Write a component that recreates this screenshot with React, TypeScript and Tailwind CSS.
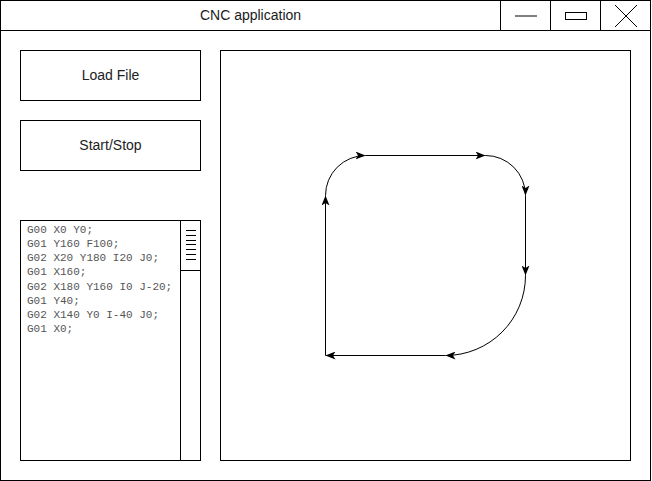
import React from 'react';

const gcode = [
  'G00 X0 Y0;',
  'G01 Y160 F100;',
  'G02 X20 Y180 I20 J0;',
  'G01 X160;',
  'G02 X180 Y160 I0 J-20;',
  'G01 Y40;',
  'G02 X140 Y0 I-40 J0;',
  'G01 X0;',
];

const ToolPath: React.FC = () => (
  <svg viewBox="221 51 409 409" width={409} height={409} className="block">
    <defs>
      <marker
        id="arrow"
        viewBox="0 0 10 8"
        refX="10"
        refY="4"
        markerWidth="10"
        markerHeight="8"
        markerUnits="userSpaceOnUse"
        orient="auto"
      >
        <path d="M10 4 L0 0 L2.5 4 L0 8 Z" fill="#000" />
      </marker>
    </defs>
    <g fill="none" stroke="#000" strokeWidth={1} markerEnd="url(#arrow)">
      <path d="M325.5 355.5 L325.5 195.5" />
      <path d="M325.5 195.5 A40 40 0 0 1 365.5 155.5" />
      <path d="M365.5 155.5 L485.5 155.5" />
      <path d="M485.5 155.5 A40 40 0 0 1 525.5 195.5" />
      <path d="M525.5 195.5 L525.5 275.5" />
      <path d="M525.5 275.5 A80 80 0 0 1 445.5 355.5" />
      <path d="M445.5 355.5 L325.5 355.5" />
    </g>
  </svg>
);

const App: React.FC = () => {
  return (
    <div className="bg-white w-[652px] h-[481px]" style={{ fontFamily: '"Liberation Sans", Arial, sans-serif' }}>
      <div className="w-[651px] h-[481px] border border-black flex flex-col">
        {/* Title bar */}
        <div className="h-[29px] border-b border-black flex shrink-0 box-content">
          <div className="flex-1 flex items-center justify-center text-[14px] text-[#1a1a1a]">
            CNC application
          </div>
          <div className="w-[49px] border-l border-black flex items-center justify-center box-content">
            <svg width="22" height="2" className="block">
              <line x1="0" y1="1" x2="22" y2="1" stroke="#000" strokeWidth={1} />
            </svg>
          </div>
          <div className="w-[49px] border-l border-black flex items-center justify-center box-content">
            <div className="w-[22px] h-[8px] border border-black" />
          </div>
          <div className="w-[49px] border-l border-black flex items-center justify-center box-content">
            <svg width="24" height="24" className="block">
              <line x1="1" y1="1" x2="23" y2="23" stroke="#000" strokeWidth={1} />
              <line x1="23" y1="1" x2="1" y2="23" stroke="#000" strokeWidth={1} />
            </svg>
          </div>
        </div>

        {/* Body */}
        <div className="flex gap-[19px] pl-[19px] pt-[19px]">
          <div className="w-[181px] flex flex-col">
            <button className="h-[51px] border border-black text-[14px] text-[#222] bg-white">
              Load File
            </button>
            <button className="h-[51px] mt-[19px] border border-black text-[14px] text-[#222] bg-white">
              Start/Stop
            </button>
            <div className="h-[241px] mt-[49px] border border-black flex">
              <div
                className="flex-1 pl-[6px] pt-[2px] text-[11px] leading-[14.15px] text-[#555] whitespace-pre"
                style={{ fontFamily: '"Liberation Mono", "Courier New", monospace' }}
              >
                {gcode.map((line, i) => (
                  <div key={i}>{line}</div>
                ))}
              </div>
              <div className="w-[19px] border-l border-black box-content">
                <div className="h-[50px] border-b border-black flex flex-col items-center pt-[9px] gap-[3.8px]">
                  {Array.from({ length: 7 }).map((_, i) => (
                    <div key={i} className="w-[10px] h-px bg-black" />
                  ))}
                </div>
              </div>
            </div>
          </div>

          <div className="w-[411px] h-[411px] border border-black">
            <ToolPath />
          </div>
        </div>
      </div>
    </div>
  );
};

export default App;
